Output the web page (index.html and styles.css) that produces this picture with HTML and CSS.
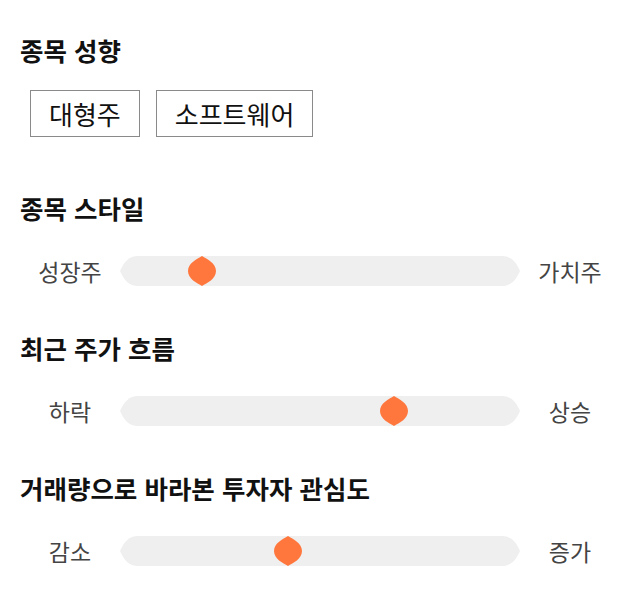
FILE: index.html
```html
<!DOCTYPE html>
<html lang="ko">
<head>
    <meta charset="UTF-8">
    <meta name="viewport" content="width=device-width, initial-scale=1.0">
    <title>종목 분석</title>
    <link rel="stylesheet" href="styles.css">
</head>
<body>
    <div class="container">
        <section class="block">
            <h2>종목 성향</h2>
            <div class="chips">
                <span class="chip">대형주</span>
                <span class="chip">소프트웨어</span>
            </div>
        </section>

        <section class="block">
            <h2>종목 스타일</h2>
            <div class="slider-row">
                <span class="label">성장주</span>
                <div class="track">
                    <svg class="track-bg" viewBox="0 0 400 30" width="400" height="30"><path d="M0 15 C4 6 9 0 18 0 H382 C391 0 396 6 400 15 C396 24 391 30 382 30 H18 C9 30 4 24 0 15 Z"/></svg>
                    <svg class="thumb" style="left: 20.5%" viewBox="0 0 28 30" width="28" height="30"><path d="M14 0 C19 3 28 7 28 15 C28 23 19 27 14 30 C9 27 0 23 0 15 C0 7 9 3 14 0 Z"/></svg>
                </div>
                <span class="label">가치주</span>
            </div>
        </section>

        <section class="block">
            <h2>최근 주가 흐름</h2>
            <div class="slider-row">
                <span class="label">하락</span>
                <div class="track">
                    <svg class="track-bg" viewBox="0 0 400 30" width="400" height="30"><path d="M0 15 C4 6 9 0 18 0 H382 C391 0 396 6 400 15 C396 24 391 30 382 30 H18 C9 30 4 24 0 15 Z"/></svg>
                    <svg class="thumb" style="left: 68.5%" viewBox="0 0 28 30" width="28" height="30"><path d="M14 0 C19 3 28 7 28 15 C28 23 19 27 14 30 C9 27 0 23 0 15 C0 7 9 3 14 0 Z"/></svg>
                </div>
                <span class="label">상승</span>
            </div>
        </section>

        <section class="block">
            <h2>거래량으로 바라본 투자자 관심도</h2>
            <div class="slider-row">
                <span class="label">감소</span>
                <div class="track">
                    <svg class="track-bg" viewBox="0 0 400 30" width="400" height="30"><path d="M0 15 C4 6 9 0 18 0 H382 C391 0 396 6 400 15 C396 24 391 30 382 30 H18 C9 30 4 24 0 15 Z"/></svg>
                    <svg class="thumb" style="left: 42%" viewBox="0 0 28 30" width="28" height="30"><path d="M14 0 C19 3 28 7 28 15 C28 23 19 27 14 30 C9 27 0 23 0 15 C0 7 9 3 14 0 Z"/></svg>
                </div>
                <span class="label">증가</span>
            </div>
        </section>
    </div>
</body>
</html>
```

FILE: styles.css
```css
body {
    margin: 0;
    font-family: "Noto Sans CJK KR", "Noto Sans", sans-serif;
    color: #111;
    background: #fff;
}
.container {
    width: 600px;
    padding: 35px 20px 0;
}
h2 {
    margin: 0;
    font-size: 25.5px;
    line-height: 30px;
    font-weight: bold;
    color: #111;
}
.block + .block {
    margin-top: 56px;
}
.block + .block + .block {
    margin-top: 47px;
}
.chips {
    display: flex;
    gap: 16px;
    margin-top: 25px;
    padding-left: 10px;
}
.chip {
    box-sizing: border-box;
    height: 47px;
    padding: 0 18px;
    border: 1px solid #8a8a8a;
    font-size: 26px;
    line-height: 45px;
    color: #111;
}
.slider-row {
    display: flex;
    align-items: center;
    margin-top: 33px;
    height: 30px;
}
.label {
    width: 100px;
    text-align: center;
    font-size: 23px;
    color: #444;
}
.track {
    position: relative;
    width: 400px;
    height: 30px;
}
.track-bg {
    display: block;
}
.track-bg path {
    fill: #efefef;
}
.thumb {
    position: absolute;
    top: 0;
    transform: translateX(-50%);
}
.thumb path {
    fill: #ff773d;
}
```
